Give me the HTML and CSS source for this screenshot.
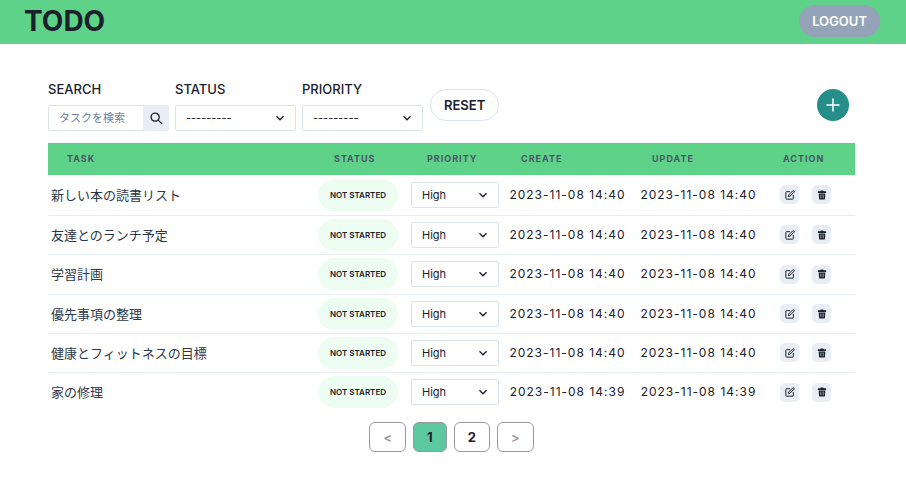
FILE: index.html
```
<!DOCTYPE html>
<html lang="ja">
<head>
<meta charset="utf-8">
<title>TODO</title>
<link rel="stylesheet" href="styles.css">
</head>
<body>
<svg class="sprite" aria-hidden="true">
  <symbol id="chevron" viewBox="0 0 24 24"><path fill="currentColor" d="M16.59 8.59L12 13.17 7.41 8.59 6 10l6 6 6-6z"/></symbol>
  <symbol id="edit" viewBox="0 0 24 24"><g fill="none" stroke="currentColor" stroke-width="2.4" stroke-linecap="round" stroke-linejoin="round"><path d="M11 4H4a2 2 0 0 0-2 2v14a2 2 0 0 0 2 2h14a2 2 0 0 0 2-2v-7"/><path d="M18.500 2.500a2.100 2.100 0 0 1 3 3L12 15l-4 1 1-4z"/></g></symbol>
  <symbol id="trash" viewBox="0 0 24 24"><path fill="currentColor" d="M8 3l1-2h6l1 2h5a1 1 0 0 1 1 1v3H2V4a1 1 0 0 1 1-1z"/><path fill="currentColor" fill-rule="evenodd" d="M4 8.500h16l-1 13a2 2 0 0 1-2 1.500H7a2 2 0 0 1-2-1.500zM8 11l.4 9h1L9 11zm3.500 0v9h1v-9zm3.500 0l-.4 9h1l.4-9z"/></symbol>
</svg>
<header class="header">
  <h1 class="logo">TODO</h1>
  <button class="pill logout" type="button">LOGOUT</button>
</header>
<main class="main">
  <form class="filters">
    <div class="field">
      <label for="search">SEARCH</label>
      <div class="search">
        <input id="search" type="text" placeholder="タスクを検索">
        <button class="search-button" type="button" aria-label="検索"><svg viewBox="0 0 24 24"><path fill="none" stroke="currentColor" stroke-width="2.400" stroke-linecap="round" d="M15.500 15.500L22 21.500M17 9.500a7.500 7.500 0 1 1-15 0a7.500 7.500 0 0 1 15 0z"/></svg></button>
      </div>
    </div>
    <div class="field">
      <label for="status">STATUS</label>
      <div class="select"><select id="status"><option>---------</option></select><svg><use href="#chevron"/></svg></div>
    </div>
    <div class="field">
      <label for="priority">PRIORITY</label>
      <div class="select"><select id="priority"><option>---------</option></select><svg><use href="#chevron"/></svg></div>
    </div>
    <button class="pill reset" type="reset">RESET</button>
    <button class="add" type="button" aria-label="追加"><svg viewBox="0 0 16 16"><path stroke="currentColor" stroke-width="1.500" stroke-linecap="round" d="M8 2v12M2 8h12"/></svg></button>
  </form>
  <table class="tasks">
    <colgroup><col><col class="col-status"><col class="col-priority"><col class="col-date"><col class="col-date"><col class="col-action"></colgroup>
    <thead>
      <tr><th>TASK</th><th>STATUS</th><th>PRIORITY</th><th>CREATE</th><th>UPDATE</th><th>ACTION</th></tr>
    </thead>
    <tbody>
      <tr>
        <td>新しい本の読書リスト</td>
        <td><button class="badge" type="button">NOT STARTED</button></td>
        <td><div class="select"><select aria-label="PRIORITY"><option>High</option></select><svg><use href="#chevron"/></svg></div></td>
        <td class="date">2023-11-08 14:40</td><td class="date">2023-11-08 14:40</td>
        <td><div class="actions"><button type="button" aria-label="編集"><svg><use href="#edit"/></svg></button><button type="button" aria-label="削除"><svg><use href="#trash"/></svg></button></div></td>
      </tr>
      <tr>
        <td>友達とのランチ予定</td>
        <td><button class="badge" type="button">NOT STARTED</button></td>
        <td><div class="select"><select aria-label="PRIORITY"><option>High</option></select><svg><use href="#chevron"/></svg></div></td>
        <td class="date">2023-11-08 14:40</td><td class="date">2023-11-08 14:40</td>
        <td><div class="actions"><button type="button" aria-label="編集"><svg><use href="#edit"/></svg></button><button type="button" aria-label="削除"><svg><use href="#trash"/></svg></button></div></td>
      </tr>
      <tr>
        <td>学習計画</td>
        <td><button class="badge" type="button">NOT STARTED</button></td>
        <td><div class="select"><select aria-label="PRIORITY"><option>High</option></select><svg><use href="#chevron"/></svg></div></td>
        <td class="date">2023-11-08 14:40</td><td class="date">2023-11-08 14:40</td>
        <td><div class="actions"><button type="button" aria-label="編集"><svg><use href="#edit"/></svg></button><button type="button" aria-label="削除"><svg><use href="#trash"/></svg></button></div></td>
      </tr>
      <tr>
        <td>優先事項の整理</td>
        <td><button class="badge" type="button">NOT STARTED</button></td>
        <td><div class="select"><select aria-label="PRIORITY"><option>High</option></select><svg><use href="#chevron"/></svg></div></td>
        <td class="date">2023-11-08 14:40</td><td class="date">2023-11-08 14:40</td>
        <td><div class="actions"><button type="button" aria-label="編集"><svg><use href="#edit"/></svg></button><button type="button" aria-label="削除"><svg><use href="#trash"/></svg></button></div></td>
      </tr>
      <tr>
        <td>健康とフィットネスの目標</td>
        <td><button class="badge" type="button">NOT STARTED</button></td>
        <td><div class="select"><select aria-label="PRIORITY"><option>High</option></select><svg><use href="#chevron"/></svg></div></td>
        <td class="date">2023-11-08 14:40</td><td class="date">2023-11-08 14:40</td>
        <td><div class="actions"><button type="button" aria-label="編集"><svg><use href="#edit"/></svg></button><button type="button" aria-label="削除"><svg><use href="#trash"/></svg></button></div></td>
      </tr>
      <tr>
        <td>家の修理</td>
        <td><button class="badge" type="button">NOT STARTED</button></td>
        <td><div class="select"><select aria-label="PRIORITY"><option>High</option></select><svg><use href="#chevron"/></svg></div></td>
        <td class="date">2023-11-08 14:39</td><td class="date">2023-11-08 14:39</td>
        <td><div class="actions"><button type="button" aria-label="編集"><svg><use href="#edit"/></svg></button><button type="button" aria-label="削除"><svg><use href="#trash"/></svg></button></div></td>
      </tr>
    </tbody>
  </table>
  <nav class="pages" aria-label="ページ">
    <button type="button" disabled>&lt;</button>
    <button class="current" type="button">1</button>
    <button type="button">2</button>
    <button type="button" disabled>&gt;</button>
  </nav>
</main>
</body>
</html>
```
FILE: styles.css
```
* { box-sizing: border-box; }
body {
  margin: 0;
  background: #fff;
  color: #1a202c;
  font: 13px/20px Inter, "Noto Sans CJK JP", sans-serif;
}
button, input, select { margin: 0; padding: 0; border: 0; font: inherit; color: inherit; background: none; }
svg { display: block; }
.sprite { position: absolute; width: 0; height: 0; }

.header {
  display: flex;
  align-items: center;
  justify-content: space-between;
  height: 44px;
  padding: 0 26px 2px 24px;
  background: #5dd288;
}
.logo { margin: 0; font-size: 28px; line-height: 36px; font-weight: 700; }
.pill { height: 32px; padding: 0 13px; border-radius: 16px; font-weight: 600; }
.logout { background: #94a3b8; color: #fff; }

.main { padding: 35px 51px 0 48px; }
.filters { display: flex; gap: 6px; margin-bottom: 12px; }
.field { width: 121px; }
.field label { display: block; margin-bottom: 6px; font-weight: 500; }
.search { display: flex; height: 26px; border: 1px solid #dbe3ef; border-radius: 2px; }
.search input { flex: 1; min-width: 0; padding-left: 10px; font-size: 11px; outline: 0; }
.search input::placeholder { color: #718096; opacity: 1; }
.search-button {
  display: grid;
  place-items: center;
  width: 26px;
  margin: -1px;
  border-radius: 4px;
  background: #e9eef6;
}
.search-button svg { width: 13px; height: 13px; }
.select { display: grid; align-items: center; height: 26px; border: 1px solid #dbe3ef; border-radius: 2px; }
.select select {
  grid-area: 1 / 1;
  width: 100%;
  height: 24px;
  padding-left: 10px;
  appearance: none;
  font-size: 11px;
}
.select svg { grid-area: 1 / 1; justify-self: end; width: 16px; height: 16px; margin-right: 7px; pointer-events: none; }
.reset { margin: 10px 0 0 1px; border: 1px solid #dbe3ef; }
.add {
  display: grid;
  place-items: center;
  width: 32px;
  height: 32px;
  margin: 10px 6px 0 auto;
  border-radius: 50%;
  background: #268e88;
  color: #fff;
}
.add svg { width: 16px; height: 16px; }

.tasks { width: 100%; border-collapse: separate; border-spacing: 0; table-layout: fixed; }
.col-status { width: 93px; }
.col-priority { width: 94px; }
.col-date { width: 131px; }
.col-action { width: 91px; }
.tasks th {
  height: 32px;
  padding: 0 0 0 19px;
  background: #5dd288;
  color: #4a5568;
  font-size: 9px;
  font-weight: 700;
  letter-spacing: 1px;
  text-align: left;
}
.tasks td { height: 39px; padding: 0 3px 1px; border-bottom: 1px solid #e7edf4; }
.tasks td:first-child { color: #2d3748; }
.tasks tbody tr:first-child td { height: 41px; }
.tasks tbody tr:nth-child(3) td { height: 40px; }
.tasks tbody tr:last-child td { border-bottom: 0; }
.tasks .date { text-align: center; font-size: 12px; letter-spacing: 1px; white-space: nowrap; }
.badge {
  display: block;
  width: 80px;
  height: 32px;
  border-radius: 16px;
  background: #edfdf2;
  font-size: 8px;
  font-weight: 600;
}
.actions { display: flex; gap: 13px; padding-left: 13px; }
.actions button { display: grid; place-items: center; width: 19px; height: 19px; border-radius: 5px; background: #e9eef6; }
.actions svg { width: 10px; height: 10px; }

.pages { display: flex; justify-content: center; gap: 7px; margin-top: 10px; }
.pages button { height: 30px; padding: 0 13px; border: 1px solid #999; border-radius: 6px; font-weight: 700; }
.pages .current { background: #5bc8a0; }
.pages button:disabled { color: #999; font-weight: 600; }
```
